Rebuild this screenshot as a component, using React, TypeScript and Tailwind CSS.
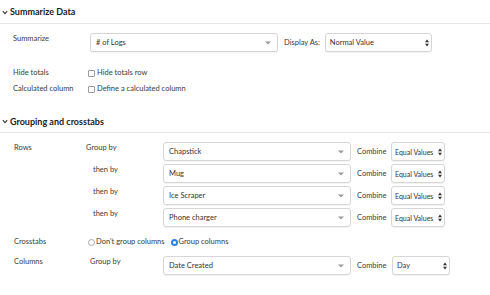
import React from "react";

const Caret = () => (
  <svg width="6" height="4" viewBox="0 0 6 4" className="shrink-0">
    <path d="M0 0.5 L6 0.5 L3 3.5 Z" fill="#9a9a9a" />
  </svg>
);

const UpDown = () => (
  <svg width="4" height="8" viewBox="0 0 4 8" className="shrink-0">
    <path d="M0 3.3 L2 0.6 L4 3.3 Z" fill="#333" />
    <path d="M0 4.7 L2 7.4 L4 4.7 Z" fill="#333" />
  </svg>
);

const Chevron = () => (
  <svg width="6" height="5" viewBox="0 0 6 5" className="shrink-0">
    <path d="M0.8 1.2 L3 3.6 L5.2 1.2" stroke="#333" strokeWidth="1.1" fill="none" />
  </svg>
);

const Dropdown = ({ value, w }: { value: string; w: string }) => (
  <div
    className={`${w} h-[19px] flex items-center justify-between pl-[5px] pr-[6px] border border-[#d6d6d6] rounded-[3px] bg-white shadow-[0_1px_1px_rgba(0,0,0,0.05)] text-[#333]`}
  >
    <span className="whitespace-nowrap">{value}</span>
    <Caret />
  </div>
);

const NativeSelect = ({ value, w, small }: { value: string; w: string; small?: boolean }) => (
  <div
    className={`${w} h-[19px] flex items-center justify-between ${small ? "pl-[3px] text-[7px]" : "pl-[4px]"} pr-[2px] border border-[#d6d6d6] rounded-[3px] bg-white shadow-[0_1px_1px_rgba(0,0,0,0.06)] text-[#333]`}
  >
    <span className="whitespace-nowrap">{value}</span>
    <UpDown />
  </div>
);

const Checkbox = () => (
  <div className="w-[7px] h-[7px] border border-[#9a9a9a] rounded-[1px] bg-white mr-[2px]" />
);

export default function App() {
  const groupRows = [
    { label: "Group by", value: "Chapstick" },
    { label: "then by", value: "Mug" },
    { label: "then by", value: "Ice Scraper" },
    { label: "then by", value: "Phone charger" },
  ];
  return (
    <div
      className="w-[490px] h-[295px] bg-white text-[7.5px] leading-[10px] text-[#3a3a3a] overflow-hidden"
      style={{ fontFamily: "Lato, 'Noto Sans', sans-serif" }}
    >
      {/* Section 1 */}
      <div className="h-[24px] pt-[1px] flex items-center pl-[2px] border-b border-[#e6e6e6] gap-[2px]">
        <Chevron />
        <span className="text-[9px] font-bold text-[#222]">Summarize Data</span>
      </div>

      <div className="flex items-start mt-[9px] pl-[13px]">
        <div className="w-[77px] pt-[1px]">Summarize</div>
        <Dropdown value="# of Logs" w="w-[188px]" />
        <div className="ml-[6px] mr-[5px] h-[19px] flex items-center whitespace-nowrap">Display As:</div>
        <NativeSelect value="Normal Value" w="w-[107px]" />
      </div>

      <div className="flex items-center h-[12px] mt-[15px] pl-[13px]">
        <div className="w-[75px]">Hide totals</div>
        <Checkbox />
        <span>Hide totals row</span>
      </div>
      <div className="flex items-center h-[12px] mt-[4px] pl-[13px]">
        <div className="w-[75px]">Calculated column</div>
        <Checkbox />
        <span>Define a calculated column</span>
      </div>

      {/* Section 2 */}
      <div className="h-[22px] mt-[16px] flex items-center pl-[2px] border-b border-[#e6e6e6] gap-[2px]">
        <Chevron />
        <span className="text-[9px] font-bold text-[#222]">Grouping and crosstabs</span>
      </div>

      <div className="flex items-start mt-[9px] pl-[14px]">
        <div className="w-[72px] pt-[1px]">Rows</div>
        <div className="flex flex-col gap-[3px]">
          {groupRows.map((r, i) => (
            <div key={i} className="flex items-start">
              <div className={`w-[77px] pt-[1px] ${i === 0 ? "pl-0" : "pl-[7px]"}`}>{r.label}</div>
              <Dropdown value={r.value} w="w-[188px]" />
              <div className="ml-[6px] h-[19px] flex items-center w-[34px]">Combine</div>
              <NativeSelect value="Equal Values" w="w-[54px]" small />
            </div>
          ))}
        </div>
      </div>

      <div className="flex items-center h-[12px] mt-[9px] pl-[14px]">
        <div className="w-[74px]">Crosstabs</div>
        <div className="w-[7px] h-[7px] rounded-full border border-[#a8a8a8] bg-white mr-[1px] shrink-0" />
        <span className="whitespace-nowrap">Don't group columns</span>
        <div className="w-[7px] h-[7px] ml-[6px] rounded-full bg-[#2f80ed] flex items-center justify-center mr-[1px] shrink-0">
          <div className="w-[3px] h-[3px] rounded-full bg-white" />
        </div>
        <span className="whitespace-nowrap">Group columns</span>
      </div>

      <div className="flex items-start mt-[8px] pl-[14px]">
        <div className="w-[76px] pt-[1px]">Columns</div>
        <div className="w-[73px] pt-[1px]">Group by</div>
        <Dropdown value="Date Created" w="w-[188px]" />
        <div className="ml-[6px] h-[19px] flex items-center w-[35px]">Combine</div>
        <NativeSelect value="Day" w="w-[58px]" />
      </div>
    </div>
  );
}
